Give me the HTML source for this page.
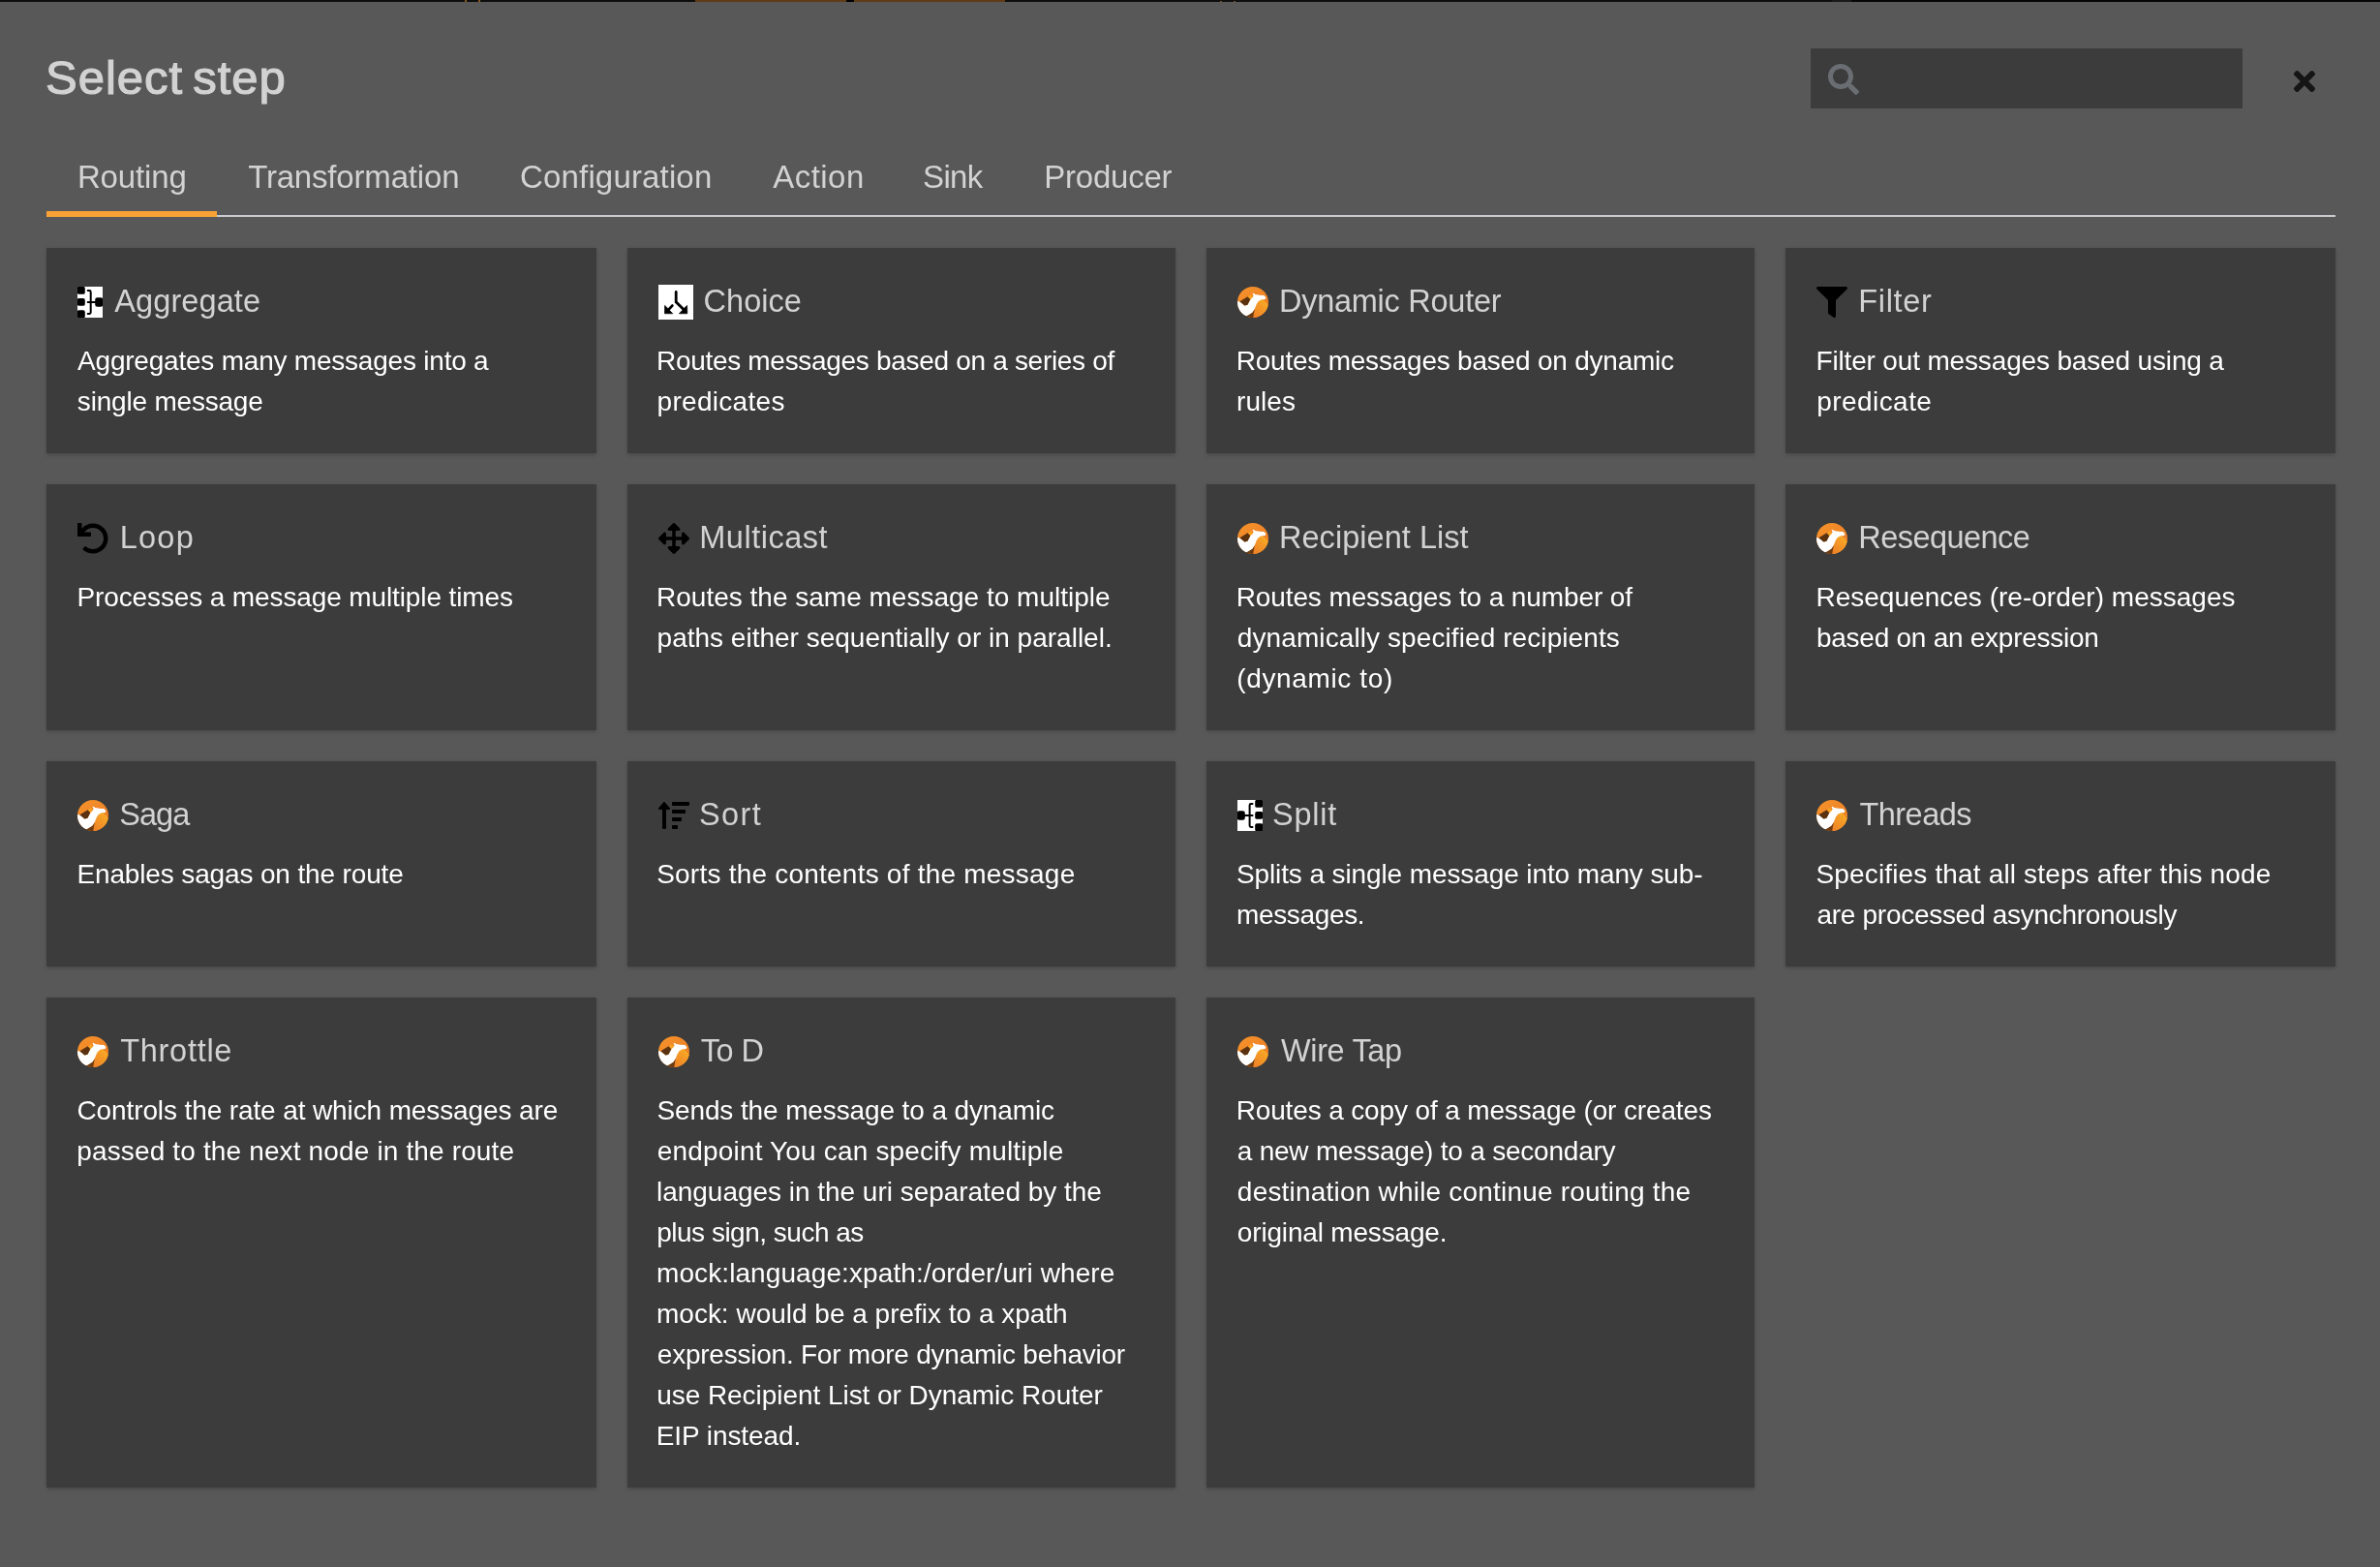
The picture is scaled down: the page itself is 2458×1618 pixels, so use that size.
<!DOCTYPE html>
<html lang="en"><head><meta charset="utf-8"><title>Select step</title>
<style>
html,body{margin:0;padding:0}
body{width:2458px;height:1618px;overflow:hidden;background:#585858;position:relative;font-family:"Liberation Sans",sans-serif;color:#fff;-webkit-font-smoothing:antialiased}
*{box-sizing:border-box}
#strip{position:absolute;left:0;top:0;width:2458px;height:2px;background:#0e0e0e}
#strip i{position:absolute;top:0;height:2px;background:#5f3c16}
#strip b{position:absolute;top:0;height:2px;width:2px;background:#8a5a1e}
#strip b.lo{top:1px;height:1px;background:#7a5220}
h1{position:absolute;margin:0;top:44px;height:72px;line-height:72px;font-size:49px;font-weight:400;color:#d2d2d2;-webkit-text-stroke:1.2px #d2d2d2;white-space:nowrap;word-spacing:-4.5px}
.search{position:absolute;left:1870px;top:50px;width:446px;height:62px;background:#3c3c3c}
.ic{position:absolute;display:block;overflow:visible}
.close{position:absolute;left:2353px;top:56px;width:54px;height:54px;border:0;padding:0;background:transparent}
.tabs{position:absolute;left:48px;top:144px;width:2364px;height:80px;border-bottom:2px solid #c8ccd0}
.tab{position:absolute;top:0;height:80px;display:block}
.tab span{position:absolute;top:15px;height:48px;line-height:48px;font-size:33px;color:#d2d2d2;white-space:nowrap}
.tab.cur::after{content:"";position:absolute;left:0;right:0;bottom:0;height:6px;background:#f9a336}
.card{position:absolute;background:#3c3c3c;box-shadow:0 2px 4px 0 rgba(3,3,3,.14),0 0 4px 0 rgba(3,3,3,.07)}
.card h2{position:absolute;left:0;top:32px;margin:0;height:48px;width:100%;font-weight:400;font-size:32.5px;line-height:48px;color:#d2d2d2}
.card h2 span{position:absolute;top:-1px;white-space:nowrap}
.card p{position:absolute;left:0;top:96px;margin:0;font-size:28px;line-height:42px;color:#fff;white-space:nowrap}
.card p span{display:block;height:42px;position:relative}
#app{position:absolute;left:0;top:0;width:2458px;height:1618px;will-change:transform}
</style></head><body><div id="app">
<div id="strip"><i style="left:718px;width:156px"></i><i style="left:874px;width:8px;background:#000"></i><i style="left:882px;width:156px"></i><b style="left:480px"></b><b style="left:494px"></b><b class="lo" style="left:1260px"></b><b class="lo" style="left:1274px"></b><i style="left:1892px;width:20px;background:#1a1a1a"></i><i style="left:1912px;width:546px;background:#070707"></i></div>
<h1 style="left:47.03px;letter-spacing:0.993px">Select step</h1>
<div class="search"><svg class="ic" style="left:18px;top:16px" width="32" height="32" viewBox="0 0 512 512" fill="#6a6e73"><path d="M505 442.7L405.3 343c-4.500-4.500-10.600-7-17-7H372c27.600-35.300 44-79.700 44-128C416 93.100 322.900 0 208 0S0 93.100 0 208s93.100 208 208 208c48.300 0 92.700-16.400 128-44v16.300c0 6.400 2.500 12.500 7 17l99.700 99.700c9.400 9.400 24.600 9.400 33.900 0l28.300-28.300c9.400-9.400 9.400-24.600.1-34zM208 336c-70.700 0-128-57.200-128-128 0-70.700 57.200-128 128-128 70.700 0 128 57.200 128 128 0 70.700-57.200 128-128 128z"/></svg></div>
<button class="close" aria-label="Close"><svg class="ic" style="left:16px;top:12px" width="22" height="32" viewBox="0 0 352 512" fill="#151515"><path d="M242.72 256l100.070-100.070c12.280-12.280 12.280-32.190 0-44.480l-22.240-22.240c-12.280-12.280-32.190-12.280-44.480 0L176 189.280 75.930 89.210c-12.280-12.280-32.190-12.280-44.480 0L9.210 111.450c-12.280 12.280-12.280 32.190 0 44.480L109.280 256 9.210 356.070c-12.280 12.280-12.280 32.190 0 44.480l22.240 22.240c12.280 12.280 32.200 12.280 44.480 0L176 322.720l100.070 100.070c12.280 12.280 32.200 12.280 44.480 0l22.240-22.240c12.280-12.280 12.280-32.190 0-44.480L242.720 256z"/></svg></button>
<nav class="tabs">
<a class="tab cur" style="left:0px;width:176px"><span style="left:31.94px;letter-spacing:-0.148px">Routing</span></a>
<a class="tab" style="left:176px;width:282px"><span style="left:32.13px;letter-spacing:-0.178px">Transformation</span></a>
<a class="tab" style="left:458px;width:260px"><span style="left:31.06px;letter-spacing:0.158px">Configuration</span></a>
<a class="tab" style="left:718px;width:155px"><span style="left:32.28px;letter-spacing:0.451px">Action</span></a>
<a class="tab" style="left:873px;width:126px"><span style="left:32.09px;letter-spacing:-0.659px">Sink</span></a>
<a class="tab" style="left:999px;width:198px"><span style="left:31.29px;letter-spacing:-0.233px">Producer</span></a>
</nav>
<main>
<article class="card" style="left:48px;top:256px;width:568px;height:212px"><h2><svg class="ic" style="left:32px;top:8px;overflow:hidden" width="26" height="32" viewBox="0 0 26 32">
<rect width="26" height="32" fill="#fff"/>
<g fill="#000">
<rect x="-0.3" y="-0.2" width="8.1" height="8" rx="1.9"/>
<rect x="-0.3" y="12.1" width="8.1" height="7.7" rx="1.9"/>
<rect x="-0.3" y="24.3" width="8.1" height="8" rx="1.9"/>
<rect x="18.2" y="11.2" width="8.1" height="9.5" rx="2.3"/>
</g>
<path d="M10.7 4H12.3Q13.7 4 13.7 5.4V26.6Q13.7 28 12.3 28H10.7M10.7 15.95H18.4" fill="none" stroke="#000" stroke-width="2" stroke-linecap="round" stroke-linejoin="round"/>
</svg><span style="left:70.33px;letter-spacing:0.087px">Aggregate</span></h2><p><span style="left:32.08px;letter-spacing:-0.217px">Aggregates many messages into a</span><span style="left:31.85px;letter-spacing:-0.199px">single message</span></p></article>
<article class="card" style="left:648px;top:256px;width:566px;height:212px"><h2><svg class="ic" style="left:32px;top:6px" width="36" height="36" viewBox="0 0 36 36">
<rect width="36" height="36" fill="#fff"/>
<path d="M18.2 7.4V17.8L26 25.4M14.3 21.6L10.6 25.6" fill="none" stroke="#000" stroke-width="2.8" stroke-linecap="round" stroke-linejoin="miter"/>
<path d="M29.6 21.4L29.8 29.8L21.4 29.8L24.6 26.6L26.3 24.5Z" fill="#000" stroke="#000" stroke-width="0.7" stroke-linejoin="round"/>
<path d="M6.6 21.4L6.5 29.8L14.8 29.8L11.6 26.6L9.8 24.5Z" fill="#000" stroke="#000" stroke-width="0.7" stroke-linejoin="round"/>
</svg><span style="left:78.51px;letter-spacing:0.053px">Choice</span></h2><p><span style="left:30.02px;letter-spacing:-0.308px">Routes messages based on a series of</span><span style="left:30.57px;letter-spacing:0.298px">predicates</span></p></article>
<article class="card" style="left:1246px;top:256px;width:566px;height:212px"><h2><svg class="ic" style="left:32px;top:8px" width="32" height="32" viewBox="0 0 32 32">
<defs>
<linearGradient id="cg1" x1="0" y1="0" x2="1" y2="1"><stop offset="0" stop-color="#f6932a"/><stop offset="1" stop-color="#ea7a26"/></linearGradient>
<linearGradient id="cs1" x1="1" y1="0" x2="0.2" y2="1"><stop offset="0" stop-color="#fbb524"/><stop offset="0.45" stop-color="#f49a26"/><stop offset="1" stop-color="#ee8228"/></linearGradient>
<clipPath id="cc1"><circle cx="16" cy="16" r="16"/></clipPath>
</defs>
<g clip-path="url(#cc1)">
<rect width="32" height="32" fill="url(#cg1)"/>
<path d="M21.6 14.6C23 13.4 24.6 13 26 13.4C28.6 15 30.8 17.4 32.5 20.2V33H16L17.9 22.8L19.8 17.6Z" fill="url(#cs1)"/>
<path d="M10.4 10.2L13.6 8.6L16.4 10.4L13.4 13.6Z" fill="#f7a324"/>
<path d="M2.0 15.6L10.6 10.2L13.4 13.4L10.8 18.9L7.4 19.9Z" fill="#5b3210"/>
<path d="M8.5 30.6L15.5 26.5L17.9 22.8L16.9 27.6L16.1 33H8Z" fill="#6a3a10"/>
<path d="M-1 14.8L2.3 15.6L7.5 19.8L10.6 18.8L13.3 13.6L15.8 10.9L16.7 9.3L15.5 7.4L16.7 6.8L18.3 7.9L22.8 8.7L27.4 9.1L29.4 11.2L28.7 12.9L24.4 13.6L21.8 14.9L19.9 17.8L17.9 22.8L15.5 26.5L11.8 29.0L8.7 30.6L4 30L-1 24Z" fill="#fff"/>
</g></svg><span style="left:74.99px;letter-spacing:-0.263px">Dynamic Router</span></h2><p><span style="left:30.68px;letter-spacing:-0.216px">Routes messages based on dynamic</span><span style="left:31.00px;letter-spacing:0.083px">rules</span></p></article>
<article class="card" style="left:1844px;top:256px;width:568px;height:212px"><h2><svg class="ic" style="left:32px;top:8px" width="32" height="32" viewBox="0 0 512 512" fill="#000"><path d="M487.976 0H24.028C2.71 0-8.047 25.866 7.058 40.971L192 225.941V432c0 7.831 3.821 15.17 10.237 19.662l80 55.98C298.02 518.69 320 507.493 320 487.98V225.941l184.947-184.97C520.021 25.896 509.338 0 487.976 0z"/></svg><span style="left:75.27px;letter-spacing:0.650px">Filter</span></h2><p><span style="left:31.45px;letter-spacing:-0.155px">Filter out messages based using a</span><span style="left:32.13px;letter-spacing:0.454px">predicate</span></p></article>
<article class="card" style="left:48px;top:500px;width:568px;height:254px"><h2><svg class="ic" style="left:32px;top:8px" width="32" height="32" viewBox="0 0 512 512" fill="#000"><path d="M212.333 224.333H12c-6.627 0-12-5.373-12-12V12C0 5.373 5.373 0 12 0h48c6.627 0 12 5.373 12 12v78.112C117.773 39.279 184.26 7.47 258.175 8.007c136.906.994 246.448 111.623 246.157 248.532C504.041 393.258 393.12 504 256.333 504c-64.089 0-122.496-24.313-166.51-64.215-5.099-4.622-5.334-12.554-.467-17.42l33.967-33.967c4.474-4.474 11.662-4.717 16.401-.525C170.76 415.336 211.58 432 256.333 432c97.268 0 176-78.716 176-176 0-97.267-78.716-176-176-176-58.496 0-110.28 28.476-142.274 72.333h98.274c6.627 0 12 5.373 12 12v48c0 6.627-5.373 12-12 12z"/></svg><span style="left:75.65px;letter-spacing:1.287px">Loop</span></h2><p><span style="left:31.46px;letter-spacing:-0.119px">Processes a message multiple times</span></p></article>
<article class="card" style="left:648px;top:500px;width:566px;height:254px"><h2><svg class="ic" style="left:32px;top:8px" width="32" height="32" viewBox="0 0 512 512" fill="#000"><path d="M352.201 425.775l-79.196 79.196c-9.373 9.373-24.568 9.373-33.941 0l-79.196-79.196c-15.119-15.119-4.411-40.971 16.971-40.97h51.162L228 284H127.196v51.162c0 21.382-25.851 32.09-40.971 16.971L7.029 272.937c-9.373-9.373-9.373-24.569 0-33.941L86.225 159.8c15.119-15.119 40.971-4.411 40.971 16.971V228H228V127.196h-51.23c-21.382 0-32.09-25.851-16.971-40.971l79.196-79.196c9.373-9.373 24.568-9.373 33.941 0l79.196 79.196c15.119 15.119 4.411 40.971-16.971 40.971h-51.162V228h100.804v-51.162c0-21.382 25.851-32.09 40.97-16.971l79.196 79.196c9.373 9.373 9.373 24.569 0 33.941L425.773 352.2c-15.119 15.119-40.971 4.411-40.97-16.971V284H284v100.804h51.23c21.382 0 32.09 25.851 16.971 40.971z"/></svg><span style="left:74.27px;letter-spacing:0.500px">Multicast</span></h2><p><span style="left:30.02px;letter-spacing:0.005px">Routes the same message to multiple</span><span style="left:30.57px;letter-spacing:0.002px">paths either sequentially or in parallel.</span></p></article>
<article class="card" style="left:1246px;top:500px;width:566px;height:254px"><h2><svg class="ic" style="left:32px;top:8px" width="32" height="32" viewBox="0 0 32 32">
<defs>
<linearGradient id="cg2" x1="0" y1="0" x2="1" y2="1"><stop offset="0" stop-color="#f6932a"/><stop offset="1" stop-color="#ea7a26"/></linearGradient>
<linearGradient id="cs2" x1="1" y1="0" x2="0.2" y2="1"><stop offset="0" stop-color="#fbb524"/><stop offset="0.45" stop-color="#f49a26"/><stop offset="1" stop-color="#ee8228"/></linearGradient>
<clipPath id="cc2"><circle cx="16" cy="16" r="16"/></clipPath>
</defs>
<g clip-path="url(#cc2)">
<rect width="32" height="32" fill="url(#cg2)"/>
<path d="M21.6 14.6C23 13.4 24.6 13 26 13.4C28.6 15 30.8 17.4 32.5 20.2V33H16L17.9 22.8L19.8 17.6Z" fill="url(#cs2)"/>
<path d="M10.4 10.2L13.6 8.6L16.4 10.4L13.4 13.6Z" fill="#f7a324"/>
<path d="M2.0 15.6L10.6 10.2L13.4 13.4L10.8 18.9L7.4 19.9Z" fill="#5b3210"/>
<path d="M8.5 30.6L15.5 26.5L17.9 22.8L16.9 27.6L16.1 33H8Z" fill="#6a3a10"/>
<path d="M-1 14.8L2.3 15.6L7.5 19.8L10.6 18.8L13.3 13.6L15.8 10.9L16.7 9.3L15.5 7.4L16.7 6.8L18.3 7.9L22.8 8.7L27.4 9.1L29.4 11.2L28.7 12.9L24.4 13.6L21.8 14.9L19.9 17.8L17.9 22.8L15.5 26.5L11.8 29.0L8.7 30.6L4 30L-1 24Z" fill="#fff"/>
</g></svg><span style="left:74.99px;letter-spacing:0.041px">Recipient List</span></h2><p><span style="left:30.68px;letter-spacing:-0.105px">Routes messages to a number of</span><span style="left:31.86px;letter-spacing:0.089px">dynamically specified recipients</span><span style="left:31.34px;letter-spacing:0.630px">(dynamic to)</span></p></article>
<article class="card" style="left:1844px;top:500px;width:568px;height:254px"><h2><svg class="ic" style="left:32px;top:8px" width="32" height="32" viewBox="0 0 32 32">
<defs>
<linearGradient id="cg3" x1="0" y1="0" x2="1" y2="1"><stop offset="0" stop-color="#f6932a"/><stop offset="1" stop-color="#ea7a26"/></linearGradient>
<linearGradient id="cs3" x1="1" y1="0" x2="0.2" y2="1"><stop offset="0" stop-color="#fbb524"/><stop offset="0.45" stop-color="#f49a26"/><stop offset="1" stop-color="#ee8228"/></linearGradient>
<clipPath id="cc3"><circle cx="16" cy="16" r="16"/></clipPath>
</defs>
<g clip-path="url(#cc3)">
<rect width="32" height="32" fill="url(#cg3)"/>
<path d="M21.6 14.6C23 13.4 24.6 13 26 13.4C28.6 15 30.8 17.4 32.5 20.2V33H16L17.9 22.8L19.8 17.6Z" fill="url(#cs3)"/>
<path d="M10.4 10.2L13.6 8.6L16.4 10.4L13.4 13.6Z" fill="#f7a324"/>
<path d="M2.0 15.6L10.6 10.2L13.4 13.4L10.8 18.9L7.4 19.9Z" fill="#5b3210"/>
<path d="M8.5 30.6L15.5 26.5L17.9 22.8L16.9 27.6L16.1 33H8Z" fill="#6a3a10"/>
<path d="M-1 14.8L2.3 15.6L7.5 19.8L10.6 18.8L13.3 13.6L15.8 10.9L16.7 9.3L15.5 7.4L16.7 6.8L18.3 7.9L22.8 8.7L27.4 9.1L29.4 11.2L28.7 12.9L24.4 13.6L21.8 14.9L19.9 17.8L17.9 22.8L15.5 26.5L11.8 29.0L8.7 30.6L4 30L-1 24Z" fill="#fff"/>
</g></svg><span style="left:75.27px;letter-spacing:-0.542px">Resequence</span></h2><p><span style="left:31.45px;letter-spacing:0.016px">Resequences (re-order) messages</span><span style="left:32.01px;letter-spacing:-0.260px">based on an expression</span></p></article>
<article class="card" style="left:48px;top:786px;width:568px;height:212px"><h2><svg class="ic" style="left:32px;top:8px" width="32" height="32" viewBox="0 0 32 32">
<defs>
<linearGradient id="cg4" x1="0" y1="0" x2="1" y2="1"><stop offset="0" stop-color="#f6932a"/><stop offset="1" stop-color="#ea7a26"/></linearGradient>
<linearGradient id="cs4" x1="1" y1="0" x2="0.2" y2="1"><stop offset="0" stop-color="#fbb524"/><stop offset="0.45" stop-color="#f49a26"/><stop offset="1" stop-color="#ee8228"/></linearGradient>
<clipPath id="cc4"><circle cx="16" cy="16" r="16"/></clipPath>
</defs>
<g clip-path="url(#cc4)">
<rect width="32" height="32" fill="url(#cg4)"/>
<path d="M21.6 14.6C23 13.4 24.6 13 26 13.4C28.6 15 30.8 17.4 32.5 20.2V33H16L17.9 22.8L19.8 17.6Z" fill="url(#cs4)"/>
<path d="M10.4 10.2L13.6 8.6L16.4 10.4L13.4 13.6Z" fill="#f7a324"/>
<path d="M2.0 15.6L10.6 10.2L13.4 13.4L10.8 18.9L7.4 19.9Z" fill="#5b3210"/>
<path d="M8.5 30.6L15.5 26.5L17.9 22.8L16.9 27.6L16.1 33H8Z" fill="#6a3a10"/>
<path d="M-1 14.8L2.3 15.6L7.5 19.8L10.6 18.8L13.3 13.6L15.8 10.9L16.7 9.3L15.5 7.4L16.7 6.8L18.3 7.9L22.8 8.7L27.4 9.1L29.4 11.2L28.7 12.9L24.4 13.6L21.8 14.9L19.9 17.8L17.9 22.8L15.5 26.5L11.8 29.0L8.7 30.6L4 30L-1 24Z" fill="#fff"/>
</g></svg><span style="left:75.29px;letter-spacing:-0.986px">Saga</span></h2><p><span style="left:31.46px;letter-spacing:-0.143px">Enables sagas on the route</span></p></article>
<article class="card" style="left:648px;top:786px;width:566px;height:212px"><h2><svg class="ic" style="left:32px;top:8px" width="32" height="32" viewBox="0 0 512 512" fill="#000"><path d="M304 416h-64a16 16 0 0 0-16 16v32a16 16 0 0 0 16 16h64a16 16 0 0 0 16-16v-32a16 16 0 0 0-16-16zM16 160h48v304a16 16 0 0 0 16 16h32a16 16 0 0 0 16-16V160h48c14.210 0 21.380-17.240 11.310-27.310l-80-96a16 16 0 0 0-22.620 0l-80 96C-5.350 142.740 1.770 160 16 160zm416 0H240a16 16 0 0 0-16 16v32a16 16 0 0 0 16 16h192a16 16 0 0 0 16-16v-32a16 16 0 0 0-16-16zm-64 128H240a16 16 0 0 0-16 16v32a16 16 0 0 0 16 16h128a16 16 0 0 0 16-16v-32a16 16 0 0 0-16-16zM496 32H240a16 16 0 0 0-16 16v32a16 16 0 0 0 16 16h256a16 16 0 0 0 16-16V48a16 16 0 0 0-16-16z"/></svg><span style="left:74.08px;letter-spacing:1.358px">Sort</span></h2><p><span style="left:30.18px;letter-spacing:0.223px">Sorts the contents of the message</span></p></article>
<article class="card" style="left:1246px;top:786px;width:566px;height:212px"><h2><svg class="ic" style="left:32px;top:8px;overflow:hidden" width="26" height="32" viewBox="0 0 26 32">
<rect width="26" height="32" fill="#fff"/>
<g fill="#000">
<rect x="18.2" y="-0.2" width="8.1" height="8" rx="1.9"/>
<rect x="18.2" y="12.1" width="8.1" height="7.7" rx="1.9"/>
<rect x="18.2" y="24.3" width="8.1" height="8" rx="1.9"/>
<rect x="-0.3" y="11.2" width="8.1" height="9.5" rx="2.3"/>
</g>
<path d="M15.5 4H14Q12.6 4 12.6 5.4V26.6Q12.6 28 14 28H15.5M15.5 15.95H7.6" fill="none" stroke="#000" stroke-width="2" stroke-linecap="round" stroke-linejoin="round"/>
</svg><span style="left:67.95px;letter-spacing:0.775px">Split</span></h2><p><span style="left:30.88px;letter-spacing:-0.104px">Splits a single message into many sub-</span><span style="left:31.00px;letter-spacing:-0.352px">messages.</span></p></article>
<article class="card" style="left:1844px;top:786px;width:568px;height:212px"><h2><svg class="ic" style="left:32px;top:8px" width="32" height="32" viewBox="0 0 32 32">
<defs>
<linearGradient id="cg5" x1="0" y1="0" x2="1" y2="1"><stop offset="0" stop-color="#f6932a"/><stop offset="1" stop-color="#ea7a26"/></linearGradient>
<linearGradient id="cs5" x1="1" y1="0" x2="0.2" y2="1"><stop offset="0" stop-color="#fbb524"/><stop offset="0.45" stop-color="#f49a26"/><stop offset="1" stop-color="#ee8228"/></linearGradient>
<clipPath id="cc5"><circle cx="16" cy="16" r="16"/></clipPath>
</defs>
<g clip-path="url(#cc5)">
<rect width="32" height="32" fill="url(#cg5)"/>
<path d="M21.6 14.6C23 13.4 24.6 13 26 13.4C28.6 15 30.8 17.4 32.5 20.2V33H16L17.9 22.8L19.8 17.6Z" fill="url(#cs5)"/>
<path d="M10.4 10.2L13.6 8.6L16.4 10.4L13.4 13.6Z" fill="#f7a324"/>
<path d="M2.0 15.6L10.6 10.2L13.4 13.4L10.8 18.9L7.4 19.9Z" fill="#5b3210"/>
<path d="M8.5 30.6L15.5 26.5L17.9 22.8L16.9 27.6L16.1 33H8Z" fill="#6a3a10"/>
<path d="M-1 14.8L2.3 15.6L7.5 19.8L10.6 18.8L13.3 13.6L15.8 10.9L16.7 9.3L15.5 7.4L16.7 6.8L18.3 7.9L22.8 8.7L27.4 9.1L29.4 11.2L28.7 12.9L24.4 13.6L21.8 14.9L19.9 17.8L17.9 22.8L15.5 26.5L11.8 29.0L8.7 30.6L4 30L-1 24Z" fill="#fff"/>
</g></svg><span style="left:76.45px;letter-spacing:-0.525px">Threads</span></h2><p><span style="left:31.45px;letter-spacing:0.156px">Specifies that all steps after this node</span><span style="left:32.48px;letter-spacing:-0.286px">are processed asynchronously</span></p></article>
<article class="card" style="left:48px;top:1030px;width:568px;height:506px"><h2><svg class="ic" style="left:32px;top:8px" width="32" height="32" viewBox="0 0 32 32">
<defs>
<linearGradient id="cg6" x1="0" y1="0" x2="1" y2="1"><stop offset="0" stop-color="#f6932a"/><stop offset="1" stop-color="#ea7a26"/></linearGradient>
<linearGradient id="cs6" x1="1" y1="0" x2="0.2" y2="1"><stop offset="0" stop-color="#fbb524"/><stop offset="0.45" stop-color="#f49a26"/><stop offset="1" stop-color="#ee8228"/></linearGradient>
<clipPath id="cc6"><circle cx="16" cy="16" r="16"/></clipPath>
</defs>
<g clip-path="url(#cc6)">
<rect width="32" height="32" fill="url(#cg6)"/>
<path d="M21.6 14.6C23 13.4 24.6 13 26 13.4C28.6 15 30.8 17.4 32.5 20.2V33H16L17.9 22.8L19.8 17.6Z" fill="url(#cs6)"/>
<path d="M10.4 10.2L13.6 8.6L16.4 10.4L13.4 13.6Z" fill="#f7a324"/>
<path d="M2.0 15.6L10.6 10.2L13.4 13.4L10.8 18.9L7.4 19.9Z" fill="#5b3210"/>
<path d="M8.5 30.6L15.5 26.5L17.9 22.8L16.9 27.6L16.1 33H8Z" fill="#6a3a10"/>
<path d="M-1 14.8L2.3 15.6L7.5 19.8L10.6 18.8L13.3 13.6L15.8 10.9L16.7 9.3L15.5 7.4L16.7 6.8L18.3 7.9L22.8 8.7L27.4 9.1L29.4 11.2L28.7 12.9L24.4 13.6L21.8 14.9L19.9 17.8L17.9 22.8L15.5 26.5L11.8 29.0L8.7 30.6L4 30L-1 24Z" fill="#fff"/>
</g></svg><span style="left:76.24px;letter-spacing:0.713px">Throttle</span></h2><p><span style="left:31.53px;letter-spacing:-0.116px">Controls the rate at which messages are</span><span style="left:31.26px;letter-spacing:0.144px">passed to the next node in the route</span></p></article>
<article class="card" style="left:648px;top:1030px;width:566px;height:506px"><h2><svg class="ic" style="left:32px;top:8px" width="32" height="32" viewBox="0 0 32 32">
<defs>
<linearGradient id="cg7" x1="0" y1="0" x2="1" y2="1"><stop offset="0" stop-color="#f6932a"/><stop offset="1" stop-color="#ea7a26"/></linearGradient>
<linearGradient id="cs7" x1="1" y1="0" x2="0.2" y2="1"><stop offset="0" stop-color="#fbb524"/><stop offset="0.45" stop-color="#f49a26"/><stop offset="1" stop-color="#ee8228"/></linearGradient>
<clipPath id="cc7"><circle cx="16" cy="16" r="16"/></clipPath>
</defs>
<g clip-path="url(#cc7)">
<rect width="32" height="32" fill="url(#cg7)"/>
<path d="M21.6 14.6C23 13.4 24.6 13 26 13.4C28.6 15 30.8 17.4 32.5 20.2V33H16L17.9 22.8L19.8 17.6Z" fill="url(#cs7)"/>
<path d="M10.4 10.2L13.6 8.6L16.4 10.4L13.4 13.6Z" fill="#f7a324"/>
<path d="M2.0 15.6L10.6 10.2L13.4 13.4L10.8 18.9L7.4 19.9Z" fill="#5b3210"/>
<path d="M8.5 30.6L15.5 26.5L17.9 22.8L16.9 27.6L16.1 33H8Z" fill="#6a3a10"/>
<path d="M-1 14.8L2.3 15.6L7.5 19.8L10.6 18.8L13.3 13.6L15.8 10.9L16.7 9.3L15.5 7.4L16.7 6.8L18.3 7.9L22.8 8.7L27.4 9.1L29.4 11.2L28.7 12.9L24.4 13.6L21.8 14.9L19.9 17.8L17.9 22.8L15.5 26.5L11.8 29.0L8.7 30.6L4 30L-1 24Z" fill="#fff"/>
</g></svg><span style="left:75.76px;letter-spacing:-0.539px">To D</span></h2><p><span style="left:30.45px;letter-spacing:-0.117px">Sends the message to a dynamic</span><span style="left:30.84px;letter-spacing:0.170px">endpoint You can specify multiple</span><span style="left:30.00px;letter-spacing:-0.025px">languages in the uri separated by the</span><span style="left:30.26px;letter-spacing:-0.500px">plus sign, such as</span><span style="left:30.00px;letter-spacing:0.093px">mock:language:xpath:/order/uri where</span><span style="left:30.00px;letter-spacing:-0.006px">mock: would be a prefix to a xpath</span><span style="left:30.84px;letter-spacing:-0.235px">expression. For more dynamic behavior</span><span style="left:30.17px;letter-spacing:-0.046px">use Recipient List or Dynamic Router</span><span style="left:29.68px;letter-spacing:-0.074px">EIP instead.</span></p></article>
<article class="card" style="left:1246px;top:1030px;width:566px;height:506px"><h2><svg class="ic" style="left:32px;top:8px" width="32" height="32" viewBox="0 0 32 32">
<defs>
<linearGradient id="cg8" x1="0" y1="0" x2="1" y2="1"><stop offset="0" stop-color="#f6932a"/><stop offset="1" stop-color="#ea7a26"/></linearGradient>
<linearGradient id="cs8" x1="1" y1="0" x2="0.2" y2="1"><stop offset="0" stop-color="#fbb524"/><stop offset="0.45" stop-color="#f49a26"/><stop offset="1" stop-color="#ee8228"/></linearGradient>
<clipPath id="cc8"><circle cx="16" cy="16" r="16"/></clipPath>
</defs>
<g clip-path="url(#cc8)">
<rect width="32" height="32" fill="url(#cg8)"/>
<path d="M21.6 14.6C23 13.4 24.6 13 26 13.4C28.6 15 30.8 17.4 32.5 20.2V33H16L17.9 22.8L19.8 17.6Z" fill="url(#cs8)"/>
<path d="M10.4 10.2L13.6 8.6L16.4 10.4L13.4 13.6Z" fill="#f7a324"/>
<path d="M2.0 15.6L10.6 10.2L13.4 13.4L10.8 18.9L7.4 19.9Z" fill="#5b3210"/>
<path d="M8.5 30.6L15.5 26.5L17.9 22.8L16.9 27.6L16.1 33H8Z" fill="#6a3a10"/>
<path d="M-1 14.8L2.3 15.6L7.5 19.8L10.6 18.8L13.3 13.6L15.8 10.9L16.7 9.3L15.5 7.4L16.7 6.8L18.3 7.9L22.8 8.7L27.4 9.1L29.4 11.2L28.7 12.9L24.4 13.6L21.8 14.9L19.9 17.8L17.9 22.8L15.5 26.5L11.8 29.0L8.7 30.6L4 30L-1 24Z" fill="#fff"/>
</g></svg><span style="left:76.97px;letter-spacing:-0.360px">Wire Tap</span></h2><p><span style="left:30.68px;letter-spacing:-0.142px">Routes a copy of a message (or creates</span><span style="left:31.73px;letter-spacing:-0.214px">a new message) to a secondary</span><span style="left:31.86px;letter-spacing:0.204px">destination while continue routing the</span><span style="left:31.86px;letter-spacing:-0.178px">original message.</span></p></article>
</main>
</div></body></html>
